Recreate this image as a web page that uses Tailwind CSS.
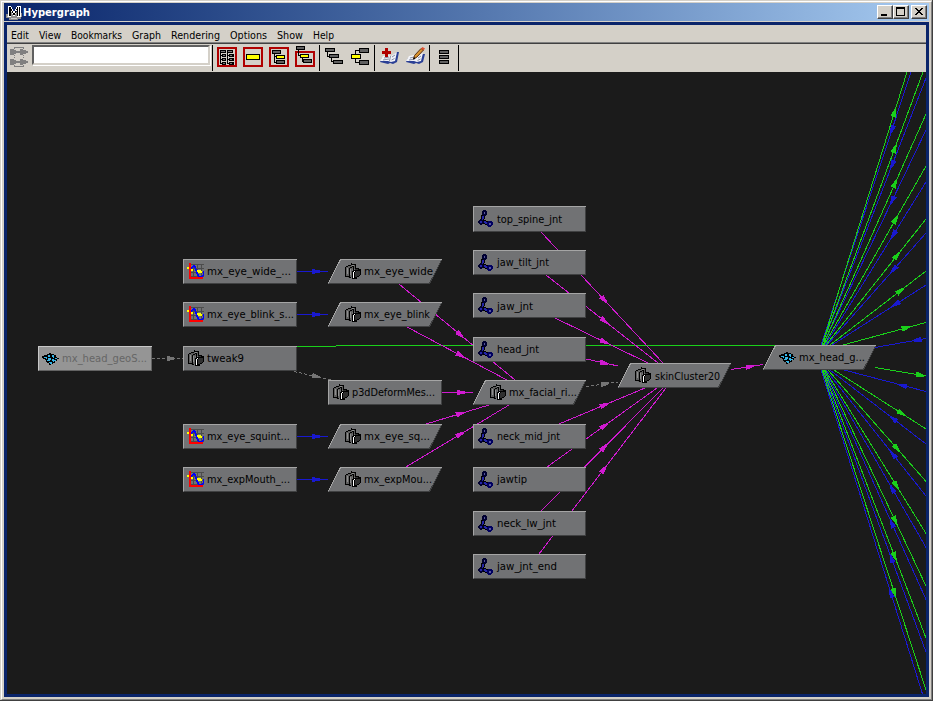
<!DOCTYPE html>
<html lang="en">
<head>
<meta charset="utf-8">
<title>Hypergraph</title>
<script src="https://cdn.jsdelivr.net/npm/@tailwindcss/browser@4"></script>
</head>
<body class="w-[933px] h-[701px] overflow-hidden bg-[#d4d0c8] font-['DejaVu_Sans_Condensed','DejaVu_Sans',sans-serif] text-[11px] text-black">
<div class="w-[933px] h-[701px] border-r border-b border-[#404040] pl-px pt-px">
<div class="w-full h-full border-l border-t border-l-white border-t-white border-r border-b border-r-[#808080] border-b-[#808080] pl-[2px] pt-px pr-[2px] pb-[2px] flex flex-col">
  <header class="h-[18px] shrink-0 flex items-center bg-linear-to-r from-[#0a246a] to-[#a6caf0] pr-[2px]">
    <svg class="w-[19px] h-[18px] shrink-0" viewBox="0 0 19 18" shape-rendering="crispEdges">
      <path d="M2 11h5V9h9v1h2v4h-1v2h-3v1H5v-2H2z" fill="#8c8c8c"/>
      <path d="M3 13h2v1H3zM7 15h6v1H7z" fill="#c8c8c8"/>
      <path d="M4 3h3v1h1v2h1v2h2V6h1V4h1V3h4v11h-4V8h-1v3h-1v2H9v-2H8V9H7v5H4z" fill="#fff"/>
      <path d="M5 4h2v2h1v2h1v2h2V8h1V6h1V4h1v9h-1V7h-1v3h-1v2H9v-2H8V8H7v5H5zM15 4h1v9h-1z" fill="#000"/>
    </svg>
    <h1 class="font-bold text-white leading-[18px] w-[70px] whitespace-nowrap"><svg class="block w-[72px] h-[18px]"><text x="0" y="13" textLength="67" lengthAdjust="spacingAndGlyphs" fill="#fff">Hypergraph</text></svg></h1>
    <div class="ml-auto flex">
      <button class="w-4 h-[14px] bg-[#d4d0c8] border border-t-white border-l-white border-r-[#404040] border-b-[#404040] shadow-[inset_-1px_-1px_#808080]"><svg class="block w-[14px] h-3" shape-rendering="crispEdges"><path d="M3 8h6v2H3z"/></svg></button>
      <button class="w-4 h-[14px] bg-[#d4d0c8] border border-t-white border-l-white border-r-[#404040] border-b-[#404040] shadow-[inset_-1px_-1px_#808080]"><svg class="block w-[14px] h-3" shape-rendering="crispEdges"><path d="M2 1h9v9H2zM3 3v6h7V3z" fill-rule="evenodd"/></svg></button>
      <button class="ml-[2px] w-4 h-[14px] bg-[#d4d0c8] border border-t-white border-l-white border-r-[#404040] border-b-[#404040] shadow-[inset_-1px_-1px_#808080]"><svg class="block w-[14px] h-3" shape-rendering="crispEdges"><path d="M3 2h2v1h1v1h2V3h1V2h2v1h-1v1H9v1H8v1h1v1h1v1h1v1H9V8H8V7H6v1H5v1H3V8h1V7h1V6h1V5H5V4H4V3H3z"/></svg></button>
    </div>
  </header>
  <div class="h-px shrink-0 bg-[#d4d0c8]"></div>
  <main class="grow min-h-0 border-[3px] border-[#0a246a] bg-[#d4d0c8] flex flex-col">
    <nav class="h-[17px] shrink-0">
      <svg class="block w-[919px] h-[17px]">
        <text x="4" y="14" textLength="18" lengthAdjust="spacingAndGlyphs">Edit</text>
        <text x="32" y="14" textLength="22" lengthAdjust="spacingAndGlyphs">View</text>
        <text x="64" y="14" textLength="51" lengthAdjust="spacingAndGlyphs">Bookmarks</text>
        <text x="125" y="14" textLength="29" lengthAdjust="spacingAndGlyphs">Graph</text>
        <text x="164" y="14" textLength="49" lengthAdjust="spacingAndGlyphs">Rendering</text>
        <text x="223" y="14" textLength="37" lengthAdjust="spacingAndGlyphs">Options</text>
        <text x="270" y="14" textLength="26" lengthAdjust="spacingAndGlyphs">Show</text>
        <text x="306" y="14" textLength="21" lengthAdjust="spacingAndGlyphs">Help</text>
      </svg>
    </nav>
    <div class="h-[2px] shrink-0 bg-[#808080] border-b border-[#404040]"></div>
    <div class="h-7 shrink-0 flex items-start pt-px">
      <svg class="ml-[2px] mt-[2px] w-[19px] h-5 shrink-0" shape-rendering="crispEdges" fill="#808080">
        <path d="M1 2h4v1h2v1h2v2H7v1H5v1H1zM11 2h3v1h3v1h2v2h-2v1h-3v1h-3V6H9V4h2zM1 12h4v1h2v1h2v2H7v1H5v1H1zM11 12h3v1h3v1h2v2h-2v1h-3v1h-3v-2H9v-2h2z"/>
        <path d="M5 0h10v2h-1V1H6v1H5zM5 18h1v1h8v-1h1v2H5zM5 8h1v1H5zM14 8h1v1h-1zM5 10h1v1H5zM14 10h1v1h-1z"/>
      </svg>
      <input aria-label="Node name" class="ml-1 w-[178px] h-5 shrink-0 bg-white border-2 border-t-[#606060] border-l-[#606060] border-r-[#d4d0c8] border-b-[#d4d0c8] shadow-[1px_1px_#fff]">
      <div class="ml-[2px] w-px h-[26px] bg-black"></div>
      <svg class="ml-1 mt-[2px] w-5 h-5 shrink-0" shape-rendering="crispEdges">
        <rect x="1" y="1" width="18" height="18" fill="none" stroke="#b00000" stroke-width="2"/>
        <path d="M3 3h6v3H3zM10 3h6v3h-6zM5 7h4v3H5zM12 7h5v3h-5zM5 11h4v3H5zM12 11h5v3h-5zM5 15h4v3H5zM12 15h5v3h-5zM3 6h1v11H3zM10 6h1v11h-1zM4 8h1v1H4zM4 12h1v1H4zM4 16h1v1H4zM11 8h1v1h-1zM11 12h1v1h-1zM11 16h1v1h-1z"/>
        <path d="M4 4h4v1H4zM11 4h4v1h-4zM6 8h2v1H6zM13 8h2v1h-2zM6 12h2v1H6zM13 12h2v1h-2zM6 16h2v1H6zM13 16h2v1h-2z" fill="#777"/>
      </svg>
      <svg class="ml-[6px] mt-[2px] w-5 h-5 shrink-0" shape-rendering="crispEdges">
        <rect x="1" y="1" width="18" height="18" fill="none" stroke="#b00000" stroke-width="2"/>
        <rect x="3.5" y="7.5" width="13" height="5" fill="#ff0" stroke="#000"/>
      </svg>
      <svg class="ml-[6px] mt-[2px] w-5 h-5 shrink-0" shape-rendering="crispEdges" stroke="#000" fill="#606060">
        <rect x="1" y="1" width="18" height="18" fill="none" stroke="#b00000" stroke-width="2"/>
        <path d="M5.500 6v9h3M5.500 9.500h3" fill="none"/>
        <rect x="3.500" y="3.500" width="8" height="3"/><rect x="7.500" y="8.500" width="8" height="3" fill="#ff0"/><rect x="7.500" y="13.500" width="8" height="3"/>
      </svg>
      <svg class="ml-[6px] mt-0 w-5 h-[22px] shrink-0" shape-rendering="crispEdges" stroke="#000" fill="#606060">
        <rect x="1" y="7" width="18" height="14" fill="none" stroke="#b00000" stroke-width="2"/>
        <path d="M3.500 5v5.500h3M7.500 12v4.500h2" fill="none"/>
        <rect x="1.500" y="1.500" width="8" height="3"/><rect x="5.500" y="9.500" width="8" height="3" fill="#ff0"/><rect x="8.500" y="14.500" width="8" height="3"/>
      </svg>
      <div class="ml-1 w-px h-[26px] bg-black"></div>
      <svg class="ml-[5px] mt-[2px] w-[19px] h-5 shrink-0" shape-rendering="crispEdges" stroke="#000" fill="#606060">
        <path d="M2.500 5v4h3M6.500 10v4.500h3" fill="none"/>
        <rect x=".5" y="1.500" width="9" height="3"/><rect x="4.500" y="7.500" width="9" height="3"/><rect x="8.500" y="13.500" width="9" height="3"/>
      </svg>
      <svg class="ml-[7px] mt-[2px] w-[19px] h-5 shrink-0" shape-rendering="crispEdges" stroke="#000" fill="#606060">
        <path d="M8 3.500H4.500v4M4.500 11v4.500H8" fill="none"/>
        <rect x="8.500" y="1.500" width="9" height="4"/><rect x=".5" y="7.500" width="9" height="4" fill="#ff0"/><rect x="8.500" y="13.500" width="9" height="4"/>
      </svg>
      <div class="ml-1 w-px h-[26px] bg-black"></div>
      <svg class="ml-1 mt-[2px] w-[21px] h-5 shrink-0">
        <path d="M1 15l2-4 5-2 4 1 6-5h2l-2 10-4 2-3-1-2 1z" fill="#2a3f95"/>
        <path d="M1 14l3-5 5-1 3 1 6-4-2 9-4 1-3-1z" fill="#f2f3f8"/>
        <path d="M11.500 9l-1 5M5 11l5-1M4 13l6-1M13 10l3-2M12.500 13l3-1.500" stroke="#8890a8" fill="none"/>
        <path d="M6 1h3v3h3v3H9v3H6V7H3V4h3z" fill="#b00000" shape-rendering="crispEdges"/>
      </svg>
      <svg class="ml-[5px] mt-px w-[21px] h-[21px] shrink-0">
        <path d="M1 16l2-4 5-2 4 1 6-3h2l-2 8-4 2-3-1-2 1z" fill="#2a3f95"/>
        <path d="M1 15l3-5 5-1 3 1 6-3-2 8-4 1-3-1z" fill="#f2f3f8"/>
        <path d="M5 12l4-1M4 14l6-1M13 12l3-2M12.500 14.500l3-1.500" stroke="#8890a8" fill="none"/>
        <path d="M8.500 13l1-3.500 6.500-7 2.500 1.500-6.500 7z" fill="#d99430" stroke="#5a3010"/>
        <path d="M16 2.500l1.500-1.500 2.500 1.500-1.500 2z" fill="#e05030"/><path d="M8 13.500l1-2.500 1.500 1.500z" fill="#000"/>
      </svg>
      <div class="ml-[3px] w-px h-[26px] bg-black"></div>
      <svg class="ml-[9px] mt-[2px] w-[11px] h-5 shrink-0" shape-rendering="crispEdges" stroke="#000" fill="#606060">
        <rect x=".5" y="3.500" width="9" height="3"/><rect x=".5" y="8.500" width="9" height="3"/><rect x=".5" y="13.500" width="9" height="3"/>
      </svg>
      <div class="ml-[8px] w-px h-[26px] bg-black"></div>
    </div>
    <svg id="graph" class="block w-[919px] grow min-h-0 bg-[#1b1b1b]" viewBox="7 72 919 622" preserveAspectRatio="xMinYMin slice">
      <defs>
        <symbol id="curve" width="17" height="17" viewBox="0 0 17 17" shape-rendering="crispEdges" overflow="visible">
          <path d="M4 1.500h13M4 5.500h13M4 9.500h13M4 13.500h13M6.500 1v15M10.500 1v15M14.500 1v15" stroke="#4c4c4c" fill="none"/>
          <path d="M0 4h2v2H0zM4 6h2v2H4zM9 7h5v1h1v2h-5V9H9z" fill="#ff0"/>
          <path d="M4 4h1V3h1V2h2v1h1v3h1v3h1v2h1v2h3v-1h1V8h1v5h-1v1h-1v1h-3v-1h-1v-1h-1v-2H9V8H8V5H7V4H6v1H5v1H4z" fill="#00f"/>
          <path d="M2 0h2v14h12v2H2z" fill="#f00"/>
        </symbol>
        <symbol id="deform" width="16" height="16" viewBox="0 0 16 16" shape-rendering="crispEdges" overflow="visible">
          <path d="M1 4h2V2h3V0h1v1h3v1h1v4H7v8H5v1H3v-1H1z" fill="#5e5e5e"/>
          <path d="M0 4h1v9h1v1H0zM1 3h2v1H1zM3 2h3v1H3zM6 0h1v1h3v1H6zM10 1h1v5h-1zM4 5h1v9h1v1H4zM5 4h2v1H5zM7 3h2v1H7zM8 4h1v3H8zM2 13h2v1H2z"/>
          <path d="M2 5h1v6H2zM5 6h1v6H5zM7 2h2v1H7z" fill="#8f8f8f"/>
          <path d="M7 8h1V7h2V5h4v1h2v6h-1v1h-1v1h-2v2H7z"/>
          <path d="M10 9h1V8h4v4h-1v1h-2v1h-2zM10 6h3v1h-3z" fill="#303030"/>
          <path d="M8 9h1v6H8zM9 8h1v1H9z" fill="#fff"/>
        </symbol>
        <symbol id="joint" width="16" height="17" viewBox="0 0 16 17" shape-rendering="crispEdges" overflow="visible">
          <path d="M6 4L4 11l7 3" stroke="#000" stroke-width="4" fill="none"/>
          <path d="M6 4L4 11l7 3" stroke="#2424a8" stroke-width="2" fill="none"/>
          <circle cx="6.500" cy="3" r="2" fill="#5555a0" stroke="#000030" stroke-width="1.700"/>
          <circle cx="3" cy="12" r="2" fill="#2424a8" stroke="#000030" stroke-width="1.500"/>
          <circle cx="12" cy="14" r="2" fill="#5555a0" stroke="#000060" stroke-width="1.700"/>
        </symbol>
        <symbol id="mesh" width="18" height="13" viewBox="0 0 18 13" shape-rendering="crispEdges" overflow="visible">
          <path d="M0 3h2V2h3V1h2V0h2v1h3v1h2v2h1v1h2v1h-2v2h-2v2h-2v1h-2v1H7v-2H5V9H4V7H3V6H1V5H0z"/>
          <path d="M2 4h3v2H4V5H2zM6 2h2v2H6zM10 2h2v3h-1V4h-1zM5 7h1V5h3v2H8v1H5zM10 6h2v1h2v1h-2v1h-1V8h-1zM7 9h3v2H8v-1H7zM13 5h2v1h-2z" fill="#35b5e8"/>
        </symbol>
      </defs>
      <g id="links" shape-rendering="crispEdges" fill="none"></g>
      <g id="nodes"></g>
    </svg>
  </main>
</div>
</div>
<script>
const NS = 'http://www.w3.org/2000/svg';
function add(parent, tag, attrs, text) {
  const e = document.createElementNS(NS, tag);
  for (const k in attrs) e.setAttribute(k, attrs[k]);
  if (text) e.textContent = text;
  parent.appendChild(e);
  return e;
}
const links = document.getElementById('links'), nodes = document.getElementById('nodes');
const M = '#d01ad0', B = '#1919d0', G = '#1ad01a', D = '#757575';

// Link from (x1,y1) to (x2,y2); the arrow sits at fraction t, pointing along dir.
function link(c, x1, y1, x2, y2, t, dir = 1, dash = false) {
  const a = { x1, y1, x2, y2, stroke: c };
  if (dash) a['stroke-dasharray'] = '3 2';
  add(links, 'line', a);
  if (t == null) return;
  const x = x1 + (x2 - x1) * t, y = y1 + (y2 - y1) * t;
  const r = Math.atan2(y2 - y1, x2 - x1) * 180 / Math.PI + (dir < 0 ? 180 : 0);
  add(links, 'path', { d: 'M-4 -2.700L4 -.9V.9L-4 2.700z', fill: c, transform: `translate(${x} ${y}) rotate(${r})` });
}
// Same, with the arrow given by its x coordinate or its y coordinate.
const byX = (c, x1, y1, x2, y2, x, d, dash) => link(c, x1, y1, x2, y2, (x - x1) / (x2 - x1), d, dash);
const byY = (c, x1, y1, x2, y2, y, d) => link(c, x1, y1, x2, y2, (y - y1) / (y2 - y1), d);

// Outgoing and incoming fan of the head shape
[[821,345,911,72,129],[822,345,926,78,164],[823,345,926,130,200],[825,345,926,182,234],[827,345,926,233,269],[832,345,926,285,304],[875,347.500,926,338.500,340],
 [844,370,926,391.500,385.500],[830,370,926,444,419],[826,370,926,496,455],[824,370,926,547.500,489],[823,370,926,599.500,524],[822,370,926,652,559],[821,370,922.500,694,594]
].forEach(a => byY(B, ...a, -1));
[[822,345,907,72,113],[822,345,923,72,149],[823,345,926,114,184],[824,345,926,166,220],[826,345,926,219,256],[830,345,926,271,291],[843,345,926,322.500,328],
 [875,367.500,926,376,375],[834,370,926,429,413],[828,370,926,481.500,448],[825,370,926,533.500,485],[824,370,926,586,520],[823,370,926,638,556],[822,370,926,690,592]
].forEach(a => byY(G, ...a, 1));

link(G, 297, 346.500, 336, 346.500);
link(G, 336, 345.500, 775, 345.500);
for (const y of [271.500, 314.500, 436.500, 479.500]) byX(B, 297, y, 328, y, 316);
byX(D, 152, 358.500, 183, 358.500, 170.500, 1, true);
byX(D, 294, 371.500, 331, 380, 316, 1, true);
byX(D, 586, 386.500, 618, 382, 605, 1, true);
[[399,284,515,380,460],[407,327,507,380,460],[442,392.500,473,392.500,461],[426,424,489,405,460],[406,467,509,405,460],
 [541,232,663,363,604],[546,275,658,363,604],[555,318,648,363,604],[586,359,618,366,604],[559,424,645,388,604],
 [547,467,657,388,604],[541,511,663,388,604],[539,554,666,388,603.500],[731,369.500,763,364.500,750]
].forEach(a => byX(M, ...a));

// x, y, width, height, icon, label, label x, label right, baseline, slanted, dimmed
[[38,346,114,25,'mesh','mx_head_geoS...',62,147,362,0,1],
 [183,259,114,25,'curve','mx_eye_wide_...',207,291,275],
 [183,302,114,25,'curve','mx_eye_blink_s...',207,294,318],
 [183,346,114,25,'deform','tweak9',207,244,362],
 [183,424,114,25,'curve','mx_eye_squint...',207,290,440],
 [183,467,114,25,'curve','mx_expMouth_...',207,290,483],
 [328,259,114,25,'deform','mx_eye_wide',364,433,275,1],
 [328,302,114,25,'deform','mx_eye_blink',364,430,318,1],
 [328,380,114,25,'deform','p3dDeformMes...',352,435,396],
 [328,424,114,25,'deform','mx_eye_sq...',364,430,440,1],
 [328,467,114,25,'deform','mx_expMou...',364,432,483,1],
 [473,206,113,26,'joint','top_spine_jnt',497,562,223],
 [473,250,113,25,'joint','jaw_tilt_jnt',497,549,266],
 [473,293,113,25,'joint','jaw_jnt',497,533,310],
 [473,337,113,25,'joint','head_jnt',497,539,353],
 [473,380,113,25,'deform','mx_facial_ri...',509,577,396,1],
 [473,424,113,25,'joint','neck_mid_jnt',497,560,440],
 [473,467,113,25,'joint','jawtip',497,527,483],
 [473,511,113,25,'joint','neck_lw_jnt',497,556,527],
 [473,554,113,25,'joint','jaw_jnt_end',497,557,570],
 [618,363,113,25,'deform','skinCluster20',655,720,380,1],
 [763,345,113,25,'mesh','mx_head_g...',799,865,361,1]
].forEach(([x, y, w, h, icon, label, tx, tr, base, slant, dim]) => {
  const s = slant ? 12 : 0, r = x + w, b = y + h;
  const g = add(nodes, 'g', { 'shape-rendering': 'crispEdges', fill: 'none' });
  add(g, 'path', { d: `M${x + s} ${y}H${r}L${r - s} ${b}H${x}z`, fill: dim ? '#959595' : '#717274' });
  add(g, 'path', { d: `M${r - .5} ${y + 1}L${r - s - .5} ${b - .5}H${x + 1}`, stroke: dim ? '#636363' : '#404142' });
  add(g, 'path', { d: `M${x + .5} ${b - 1}L${x + s + .5} ${y + .5}H${r}`, stroke: dim ? '#c8c8c8' : '#a5a5a5' });
  const off = { mesh: [4, 7], curve: [4, 4], deform: [5, 4], joint: [5, 4] }[icon];
  add(nodes, 'use', { href: '#' + icon, x: x + off[0] + s, y: y + off[1] });
  add(nodes, 'text', { x: tx, y: base, textLength: tr - tx, lengthAdjust: 'spacingAndGlyphs', fill: dim ? '#666' : '#000' }, label);
});
</script>
</body>
</html>
